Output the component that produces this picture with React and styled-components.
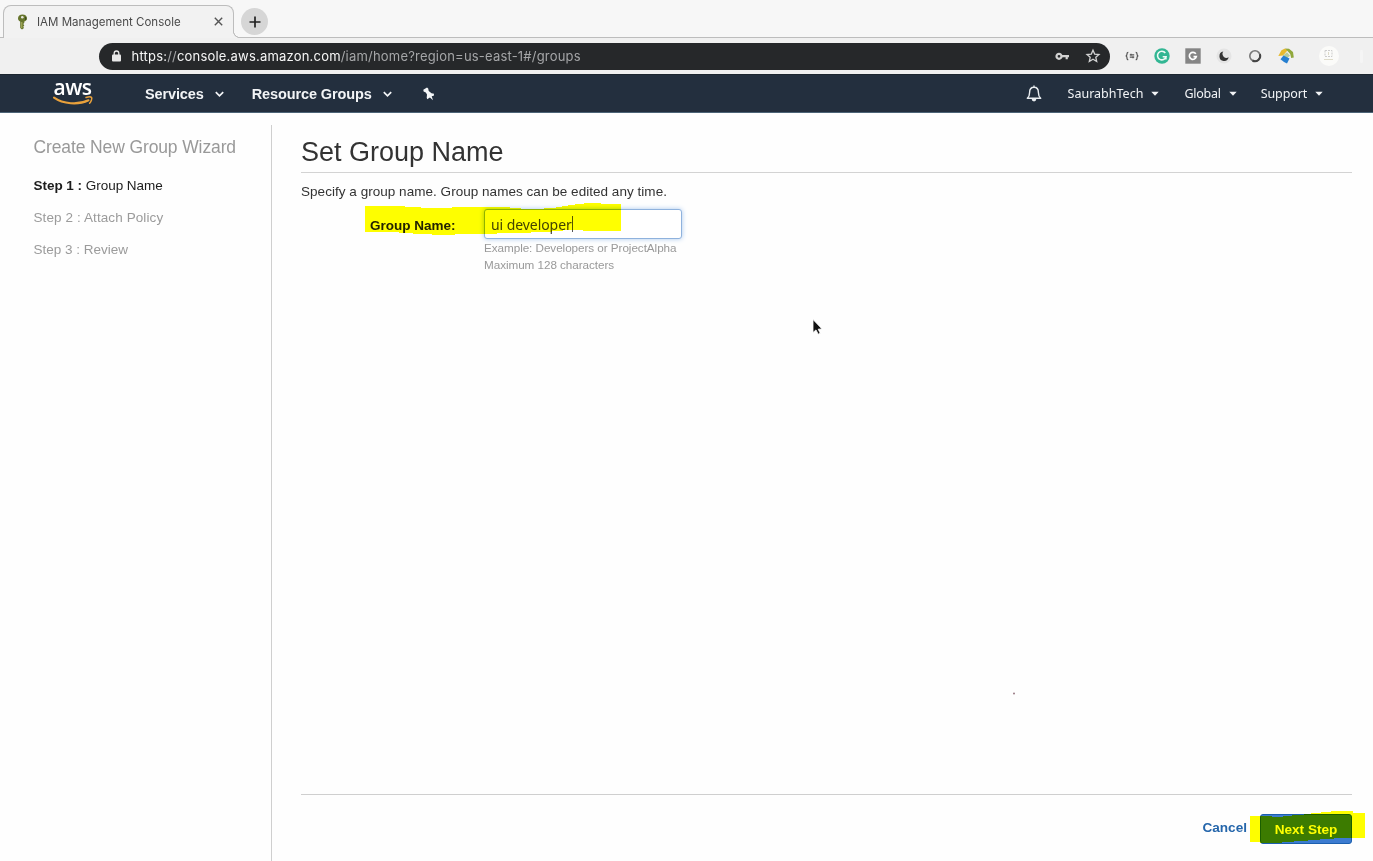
import React from "react";
import styled, { createGlobalStyle } from "styled-components";

const Global = createGlobalStyle`
  * { box-sizing: border-box; }
  body { margin: 0; background: #fefefe; overflow: hidden; }
  svg { display: block; flex: none; overflow: visible; }
`;

const helvetica = `"Liberation Sans", Arial, sans-serif`;

const Page = styled.div`
  position: relative;
  width: 100%;
  height: 100vh;
  display: flex;
  flex-direction: column;
  font-family: ${helvetica};
  overflow: hidden;
`;

const TabStrip = styled.div`
  height: 38px;
  flex: none;
  display: flex;
  align-items: flex-end;
  background: #f7f7f7;
  border-bottom: 1px solid #bdbdbd;
  font-family: Inter, sans-serif;
`;

const Tab = styled.div`
  position: relative;
  width: 231px;
  height: 33px;
  margin: 0 0 -1px 3px;
  padding: 0 10px 1px 13px;
  display: flex;
  align-items: center;
  background: #f2f2f2;
  border: 1px solid #bdbdbd;
  border-bottom: 0;
  border-radius: 8px 8px 0 0;

  &::after {
    content: "";
    position: absolute;
    right: -7px;
    bottom: 0;
    width: 7px;
    height: 7px;
    background: radial-gradient(circle at 100% 0, #f7f7f7 5.7px, #bdbdbd 6.2px, #bdbdbd 6.8px, #f2f2f2 7.3px);
  }
`;

const TabTitle = styled.span`
  flex: 1;
  margin-left: 9px;
  font-size: 11.5px;
  color: #4a4a4a;
  white-space: nowrap;
`;

const NewTab = styled.div`
  width: 27px;
  height: 27px;
  margin: 0 0 2px 7px;
  border-radius: 50%;
  background: #d6d6d6;
  display: grid;
  place-items: center;
`;

const Toolbar = styled.div`
  height: 36px;
  flex: none;
  display: flex;
  align-items: center;
  padding: 0 8px 0 99px;
  background: #f0f0f0;
`;

const AddressBar = styled.div`
  width: 1011px;
  height: 27px;
  padding: 0 10px 0 13px;
  display: flex;
  align-items: center;
  border-radius: 14px;
  background: #26282a;
  font-family: Inter, sans-serif;
`;

const Url = styled.span`
  flex: 1;
  margin-left: 10.5px;
  font-size: 13px;
  letter-spacing: 0.2px;
  color: #a5a6a8;
  white-space: nowrap;
`;
const Domain = styled.span`
  color: #f6f6f6;
`;

const Extensions = styled.div`
  display: flex;
  align-items: center;
  margin-left: 13.5px;
  gap: 14.9px;
`;

const NavBar = styled.div`
  height: 39px;
  flex: none;
  display: flex;
  align-items: center;
  background: #232f3e;
  border-top: 1px solid #1c2630;
  border-bottom: 1px solid #4d6477;
  color: #f2f4f6;
`;

const Logo = styled.div`
  width: 41px;
  margin-left: 52px;
  display: flex;
  flex-direction: column;
  align-items: center;
`;
const LogoText = styled.span`
  height: 15px;
  line-height: 12px;
  font-family: "Open Sans", sans-serif;
  font-weight: 600;
  font-size: 21px;
  letter-spacing: -0.5px;
  color: #fff;
`;

const NavItem = styled.div`
  display: flex;
  align-items: center;
  gap: ${(p) => p.$gap}px;
  margin-left: ${(p) => p.$left}px;
  white-space: nowrap;
  font-size: 14.5px;
  letter-spacing: -0.12px;
  font-weight: 700;
`;

const AccountItem = styled(NavItem)`
  font-family: "Noto Sans", sans-serif;
  font-size: 12.5px;
  font-weight: 400;
  letter-spacing: ${(p) => p.$spacing || 0}px;
`;

const Content = styled.div`
  flex: 1;
  display: flex;
  padding-top: 12px;
`;

const Sidebar = styled.aside`
  width: 272px;
  flex: none;
  padding: 11px 0 0 33.5px;
  border-right: 1px solid #cfcfcf;
`;

const WizardTitle = styled.h2`
  margin: 0 0 18px;
  font-size: 17.5px;
  letter-spacing: -0.12px;
  line-height: 22px;
  font-weight: 400;
  color: #999;
  white-space: nowrap;
`;

const Step = styled.div`
  height: 32px;
  line-height: 20px;
  font-size: 13.5px;
  letter-spacing: ${(p) => p.$spacing}px;
  color: ${(p) => (p.$active ? "#1c1c1c" : "#9b9b9b")};
  b { font-weight: 700; }
`;

const Main = styled.main`
  flex: 1;
  display: flex;
  flex-direction: column;
  padding: 0 21px 0 29px;
`;

const Heading = styled.h1`
  height: 48px;
  margin: 0;
  padding-top: 11px;
  border-bottom: 1px solid #d3d3d3;
  font-size: 27px;
  line-height: 33px;
  font-weight: 400;
  color: #333;
`;

const Intro = styled.p`
  margin: 10px 0 8px;
  font-size: 13.5px;
  letter-spacing: 0.035px;
  line-height: 18px;
  color: #333;
`;

const Field = styled.div`
  display: flex;
  padding-left: 69px;
`;

const Label = styled.label`
  width: 114px;
  line-height: 33px;
  font-size: 13.5px;
  font-weight: 700;
  color: #222;
`;

const Input = styled.div`
  width: 198px;
  height: 30px;
  display: flex;
  align-items: center;
  padding-left: 6px;
  border: 1px solid #8fb2dd;
  border-radius: 3px;
  background: #fff;
  box-shadow: 0 0 5px #a9c8ee;
  font-family: "Noto Sans", sans-serif;
  font-size: 14px;
  letter-spacing: -0.07px;
  color: #444;
`;
const Caret = styled.i`
  width: 1px;
  height: 16px;
  background: #555;
`;

const Hint = styled.div`
  font-size: 11.7px;
  letter-spacing: -0.05px;
  line-height: 17px;
  color: #999;
  white-space: nowrap;
`;

const Footer = styled.footer`
  height: 67px;
  margin-top: auto;
  padding-top: 19px;
  border-top: 1px solid #cfcfcf;
  display: flex;
  justify-content: flex-end;
  font-size: 13.6px;
  font-weight: 700;
`;

const Cancel = styled.a`
  line-height: 28px;
  margin-right: 13px;
  color: #2566ab;
`;

const NextButton = styled.button`
  width: 92px;
  height: 30px;
  padding: 0;
  border: 1px solid #1b5fae;
  border-radius: 3px;
  background: #3c7bd0;
  color: #fff;
  font: 700 13.6px ${helvetica};
`;

const Overlay = styled.svg`
  position: absolute;
  inset: 0;
  pointer-events: none;
  mix-blend-mode: ${(p) => (p.$ink ? "multiply" : "normal")};
`;

const Chevron = () => (
  <svg width="9" height="6" viewBox="0 0 9 6" fill="none" stroke="currentColor" strokeWidth="1.7">
    <path d="M.8 1.200 4.500 4.900 8.200 1.200" />
  </svg>
);
const Triangle = () => (
  <svg width="8" height="5" viewBox="0 0 8 5" fill="currentColor"><path d="M.3.8h7.400L4 4.800z" /></svg>
);

const IamKey = () => (
  <svg width="11" height="16" viewBox="0 0 11 16">
    <path d="M5.500.5C2.800.5 1 2 1 4.300c0 1.700.9 2.700 2.200 3.200V14l1.800 1.500L7 14l-.8-1.300L7.300 11.500 6.300 10 7.300 8.800V7.600C9 7 10 5.900 10 4.200 10 2 8.200.5 5.500.5z" fill="#66752c" />
    <circle cx="5.300" cy="3.300" r="1.300" fill="#e8e8df" />
    <path d="M4.800 8v6" stroke="#b3b663" />
    <path d="M8.700 3v3" stroke="#35451d" />
  </svg>
);

const Lock = () => (
  <svg width="9" height="12" viewBox="0 0 9 12">
    <path d="M2.200 5V3.300a2.300 2.300 0 0 1 4.600 0V5" fill="none" stroke="#e8e8e8" strokeWidth="1.300" />
    <rect y="4.600" width="9" height="7" rx="1" fill="#e8e8e8" />
  </svg>
);

const PasswordKey = () => (
  <svg width="14" height="9" viewBox="0 0 14 9" fill="none" stroke="#d2d2d2" strokeWidth="2.200">
    <circle cx="4" cy="4.300" r="2.500" />
    <path d="M6.500 4.100H14M11.700 4.500V7.300" />
  </svg>
);

const Star = () => (
  <svg width="14" height="14" viewBox="0 0 14 14" fill="none" stroke="#d2d2d2" strokeWidth="1.300">
    <path d="m7 1.200 1.700 3.900 4.300.4-3.200 2.800.9 4.200L7 10.300l-3.700 2.200.9-4.200L1 5.500l4.300-.4z" />
  </svg>
);

const Pin = () => (
  <svg width="13" height="14" viewBox="0 0 13 14" fill="#f4f6f8">
    <path d="M1.300 2.800 5 .5 6.200 1.500 6.700 4.100 9.500 6.200 12 6.700 11.800 8.800 9.700 9.300 11 13.200 7.900 10.500 5.200 12.200 4.700 10.800 5 7.600 3.800 5.400 1.600 4.600z" />
  </svg>
);

const Bell = () => (
  <svg width="16" height="17" viewBox="0 0 16 17" fill="none" stroke="#e9edf0" strokeWidth="1.400" strokeLinejoin="round">
    <path d="M8 .5v1.600M1.300 13.300c1.800-1.500 2.300-3 2.300-5.900C3.600 4.200 5.200 2.200 8 2.200s4.400 2 4.400 5.200c0 2.900.5 4.400 2.300 5.900z" />
    <path d="M5.700 14.100a2.300 2.300 0 0 0 4.600 0z" fill="#e9edf0" stroke="none" />
  </svg>
);

const ExtensionIcons = () => (
  <Extensions>
    <svg width="16" height="16" viewBox="0 0 16 16" fill="none" stroke="#555" strokeWidth="1.200">
      <path d="M4.300 4.300Q3 4.300 3 5.800T2.200 8Q3 8.500 3 10.100T4.300 11.700M11.700 4.300Q13 4.300 13 5.800T13.800 8Q13 8.500 13 10.100T11.700 11.700" />
      <path d="M5.800 6.800h4.400M5.800 9.200h4.400M7 5.800v2M9 8.200v2" />
    </svg>
    <svg width="16" height="16" viewBox="0 0 16 16" fill="none">
      <circle cx="8" cy="8" r="7.700" fill="#32b693" />
      <path d="M11.300 5A4.300 4.300 0 1 0 12 8.700H8.700M11.900 8.500v3" stroke="#eefaf6" strokeWidth="1.600" />
    </svg>
    <svg width="16" height="16" viewBox="0 0 16 16" fill="none">
      <rect x=".3" y=".3" width="15.400" height="15.400" fill="#858585" />
      <path d="M10.800 5.900A3.500 3.500 0 1 0 11.300 8.600H8.500" stroke="#fff" strokeWidth="1.700" />
    </svg>
    <svg width="16" height="16" viewBox="0 0 16 16">
      <circle cx="8" cy="8" r="7.500" fill="#e4e4e4" />
      <path d="M7.300 3.600A4.700 4.700 0 1 0 12.700 9.300a4 4 0 0 1-5.400-5.700z" fill="#333" />
    </svg>
    <svg width="16" height="16" viewBox="0 0 16 16">
      <circle cx="8" cy="8" r="5.200" fill="#ececec" stroke="#777" strokeWidth="1.600" />
      <path d="M12.900 6.200a5.200 5.200 0 0 1-7.400 6.300" fill="none" stroke="#444" strokeWidth="2" />
    </svg>
    <svg width="16" height="16" viewBox="0 0 16 16">
      <path d="M.3 8 3.500 2.200 7 .5 9.500 2.500 5 7.500z" fill="#e6b92c" />
      <path d="M7 .5 11 .8l4 3.200.8 5.500-2.600.6-1-4L9.500 3z" fill="#91a83c" />
      <path d="m5 7.500 4-3.300 3 3.600-3 2.400z" fill="#b5cb9a" />
      <path d="m2.500 11.200 3-3.600 6 3-2.500 4.900-3-1.600z" fill="#267fd0" />
    </svg>
  </Extensions>
);

const Profile = styled.div`
  width: 20px;
  height: 20px;
  margin-left: 25.500px;
  border-radius: 50%;
  background: #fbfbf9;
  display: grid;
  place-items: center;
`;

const MenuDots = styled.div`
  width: 3px;
  height: 13px;
  margin-left: 21px;
  border-radius: 2px;
  background: #f5f5f5;
`;

export default function App() {
  return (
    <Page>
      <Global />
      <TabStrip>
        <Tab>
          <IamKey />
          <TabTitle>IAM Management Console</TabTitle>
          <svg width="9" height="9" viewBox="0 0 9 9" stroke="#555" strokeWidth="1.400"><path d="m.8.800 7.400 7.400M8.200.8.800 8.200" /></svg>
        </Tab>
        <NewTab>
          <svg width="12" height="12" viewBox="0 0 12 12" stroke="#222" strokeWidth="1.700"><path d="M6 .5v11M.5 6h11" /></svg>
        </NewTab>
      </TabStrip>
      <Toolbar>
        <AddressBar>
          <Lock />
          <Url><Domain>https:</Domain>//<Domain>console.aws.amazon.com</Domain>/iam/home?region=us-east-1#/groups</Url>
          <PasswordKey />
          <NavItem $left={17}><Star /></NavItem>
        </AddressBar>
        <ExtensionIcons />
        <Profile>
          <svg width="10" height="12" viewBox="0 0 10 12" fill="none">
            <rect x="1" y=".5" width="7" height="6" stroke="#ccc" strokeDasharray="2 1" />
            <path d="M4.500 2v3M0 9.500h9" stroke="#dedbc8" />
          </svg>
        </Profile>
        <MenuDots />
      </Toolbar>
      <NavBar>
        <Logo>
          <LogoText>aws</LogoText>
          <svg width="40" height="10" viewBox="0 0 40 10" fill="none" stroke="#e9a13b" strokeLinecap="round">
            <path d="M1 1.700C10 8 25 9.300 35.500 4.300" strokeWidth="2.100" />
            <path d="M33 1.500c2.500-.8 5-.8 5.600 0 .6.900-.3 4-2 5.800" strokeWidth="1.500" />
          </svg>
        </Logo>
        <NavItem $left={52} $gap={11.5}>Services<Chevron /></NavItem>
        <NavItem $left={27.5} $gap={11.5}>Resource Groups<Chevron /></NavItem>
        <NavItem $left={29.5}><Pin /></NavItem>
        <AccountItem $left={591}><Bell /></AccountItem>
        <AccountItem $left={26} $gap={8}>SaurabhTech<Triangle /></AccountItem>
        <AccountItem $left={25} $gap={8} $spacing={-0.25}>Global<Triangle /></AccountItem>
        <AccountItem $left={24} $gap={8} $spacing={-0.1}>Support<Triangle /></AccountItem>
      </NavBar>
      <Content>
        <Sidebar>
          <WizardTitle>Create New Group Wizard</WizardTitle>
          <Step $active $spacing={-0.03}><b>Step 1 :</b> Group Name</Step>
          <Step $spacing={0.1}>Step 2 : Attach Policy</Step>
          <Step $spacing={0}>Step 3 : Review</Step>
        </Sidebar>
        <Main>
          <Heading>Set Group Name</Heading>
          <Intro>Specify a group name. Group names can be edited any time.</Intro>
          <Field>
            <Label>Group Name:</Label>
            <div>
              <Input>ui developer<Caret /></Input>
              <Hint>Example: Developers or ProjectAlpha</Hint>
              <Hint>Maximum 128 characters</Hint>
            </div>
          </Field>
          <Footer>
            <Cancel>Cancel</Cancel>
            <NextButton>Next Step</NextButton>
          </Footer>
        </Main>
      </Content>
      <Overlay $ink width="1373" height="861" fill="#ff0">
        <path d="M365 206H405V207H421V208H452V207H510V208H521V209H544V208H556V207H562V206H568V205H575V204H584V203H601V204H621V231H583V230H563V231H552V232H531V233H497V234H455V235H432V234H413V233H399V232H365z" />
        <path d="M1250 816H1272V817H1283V816H1292V815H1304V814H1311V813H1321V812H1331V811H1353V813H1365V838H1334V839H1320V840H1308V841H1294V842H1282V843H1260V842H1250z" />
      </Overlay>
      <Overlay width="1373" height="861">
        <path d="M813 319.500v13l3-2.600 2.200 4.300 2-1-2-4 3.800-.3z" fill="#111" stroke="#fff" strokeWidth=".8" />
        <circle cx="1014" cy="693.500" r="1" fill="#987983" />
      </Overlay>
    </Page>
  );
}
